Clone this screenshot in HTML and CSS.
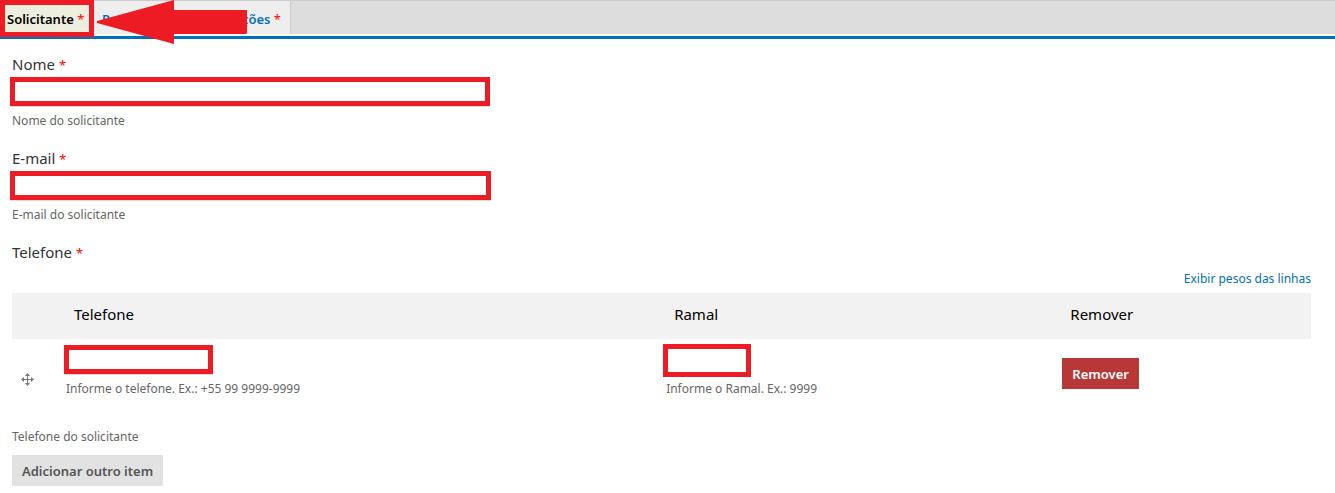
FILE: index.html
```html
<!DOCTYPE html>
<html lang="pt-br">
<head>
<meta charset="utf-8">
<title>Solicitante</title>
<link rel="stylesheet" href="styles.css">
</head>
<body>
<nav class="tabs">
  <button type="button" class="tab tab-active">Solicitante <span class="req">*</span></button>
  <button type="button" class="tab tab-next"><span>P</span><span>ções <span class="req">*</span></span></button>
  <svg class="arrow" viewBox="0 0 151 44" aria-hidden="true"><path d="M0 21V23L77 44V34H149L150 33V10H77V0Z" fill="#ed1c24"/></svg>
</nav>
<form class="form">
  <div class="field">
    <label class="label" for="nome">Nome <span class="req">*</span></label>
    <input class="input" id="nome" type="text">
    <p class="help">Nome do solicitante</p>
  </div>
  <div class="field">
    <label class="label" for="email">E-mail <span class="req">*</span></label>
    <input class="input input-email" id="email" type="email">
    <p class="help">E-mail do solicitante</p>
  </div>
  <h2 class="label">Telefone <span class="req">*</span></h2>
  <div class="weights"><a href="#pesos">Exibir pesos das linhas</a></div>
  <table class="table">
    <thead>
      <tr><th class="col-drag"></th><th class="col-phone">Telefone</th><th class="col-ext">Ramal</th><th>Remover</th></tr>
    </thead>
    <tbody>
      <tr>
        <td><svg class="move" viewBox="0 0 13 13" aria-hidden="true"><path d="M6 2h1v4h4v1H7v4H6V7H2V6h4z"/><path d="M6.500 0L9 3H4zM6.500 13L9 10H4zM0 6.500L3 4v5zM13 6.500L10 4v5z"/></svg></td>
        <td><input class="input input-phone" id="fone" type="tel" aria-labelledby="fone-help"><label class="help" id="fone-help" for="fone">Informe o telefone. Ex.: +55 99 9999-9999</label></td>
        <td><input class="input input-ext" id="ramal" type="text" aria-labelledby="ramal-help"><label class="help help-ext" id="ramal-help" for="ramal">Informe o Ramal. Ex.: 9999</label></td>
        <td><button type="button" class="btn btn-danger">Remover</button></td>
      </tr>
    </tbody>
  </table>
  <p class="help help-table">Telefone do solicitante</p>
  <button type="button" class="btn">Adicionar outro item</button>
</form>
</body>
</html>
```
FILE: styles.css
```css
* { box-sizing: border-box; }
body {
  margin: 0;
  background: #fff;
  color: #333;
  font-family: "Noto Sans", "Open Sans", sans-serif;
  font-size: 15px;
  line-height: 22px;
}
.tabs {
  position: relative;
  display: flex;
  height: 39px;
  background: linear-gradient(#ccc 1px, #ddd 1px, #ddd 34px, #fff 34px, #fff 36px, #0072bc 36px);
}
.tab {
  border: 0;
  font: 600 13px/18px "Noto Sans", "Open Sans", sans-serif;
  white-space: nowrap;
}
.tab-active {
  height: 37px;
  width: 94px;
  padding: 0 2px;
  border: 5px solid #ed1c24;
  background: #eeeede;
  color: #000;
  text-align: left;
}
.tab-next {
  display: flex;
  justify-content: space-between;
  align-items: center;
  width: 197px;
  height: 33px;
  margin-top: 1px;
  padding: 3px 9px 0 8px;
  border-right: 1px solid #ccc;
  background: #eee;
  color: #0071b8;
}
.req { color: #f00; font-size: 13px; font-weight: 400; line-height: 13px; }
.arrow {
  position: absolute;
  left: 97px;
  top: 0;
  width: 151px;
  height: 44px;
}
.form { padding: 14px 24px 0 12px; }
.field { margin-bottom: 16px; }
.label {
  display: block;
  margin: 0 0 2px;
  font-size: 15px;
  font-weight: 400;
  line-height: 22px;
}
.input {
  display: block;
  width: 480px;
  max-width: 100%;
  height: 29px;
  margin: 0 0 0 -2px;
  padding: 0 4px;
  border: 5px solid #ed1c24;
  box-shadow: 0 1px #ddd;
  background: #fff;
  font: inherit;
}
.input-email { width: 481px; }
.input-phone { width: 149px; }
.input-ext { width: 88px; height: 33px; margin: -1px 0 0 -3px; box-shadow: none; }
.help {
  display: block;
  margin: 5px 0 0;
  color: #666;
  font-size: 12px;
  line-height: 20px;
}
.help-ext { margin-top: 2px; }
.weights { text-align: right; font-size: 12px; line-height: 20px; margin: 6px 0 4px; }
.weights a { color: #0071b8; text-decoration: none; }
.table { width: 100%; border-collapse: collapse; table-layout: fixed; }
.table th {
  height: 46px;
  padding: 0 8px 4px;
  background: #f2f2f2;
  color: #000;
  font-weight: 400;
  text-align: left;
}
.table td { height: 73px; padding: 6px 0 0; vertical-align: top; }
.col-drag { width: 54px; }
.col-phone { width: 46.2%; }
.col-ext { width: 30.5%; }
.move { display: block; width: 13px; height: 13px; margin: 28px 0 0 9px; fill: #777; }
.help-table { margin: 15px 0 8px; }
.btn {
  height: 31px;
  padding: 0 10px;
  border: 0;
  background: #e2e2e2;
  color: #555;
  font: 600 13px/18px "Noto Sans", "Open Sans", sans-serif;
}
.btn-danger { margin-top: 13px; background: #b83838; color: #fff; }
```
